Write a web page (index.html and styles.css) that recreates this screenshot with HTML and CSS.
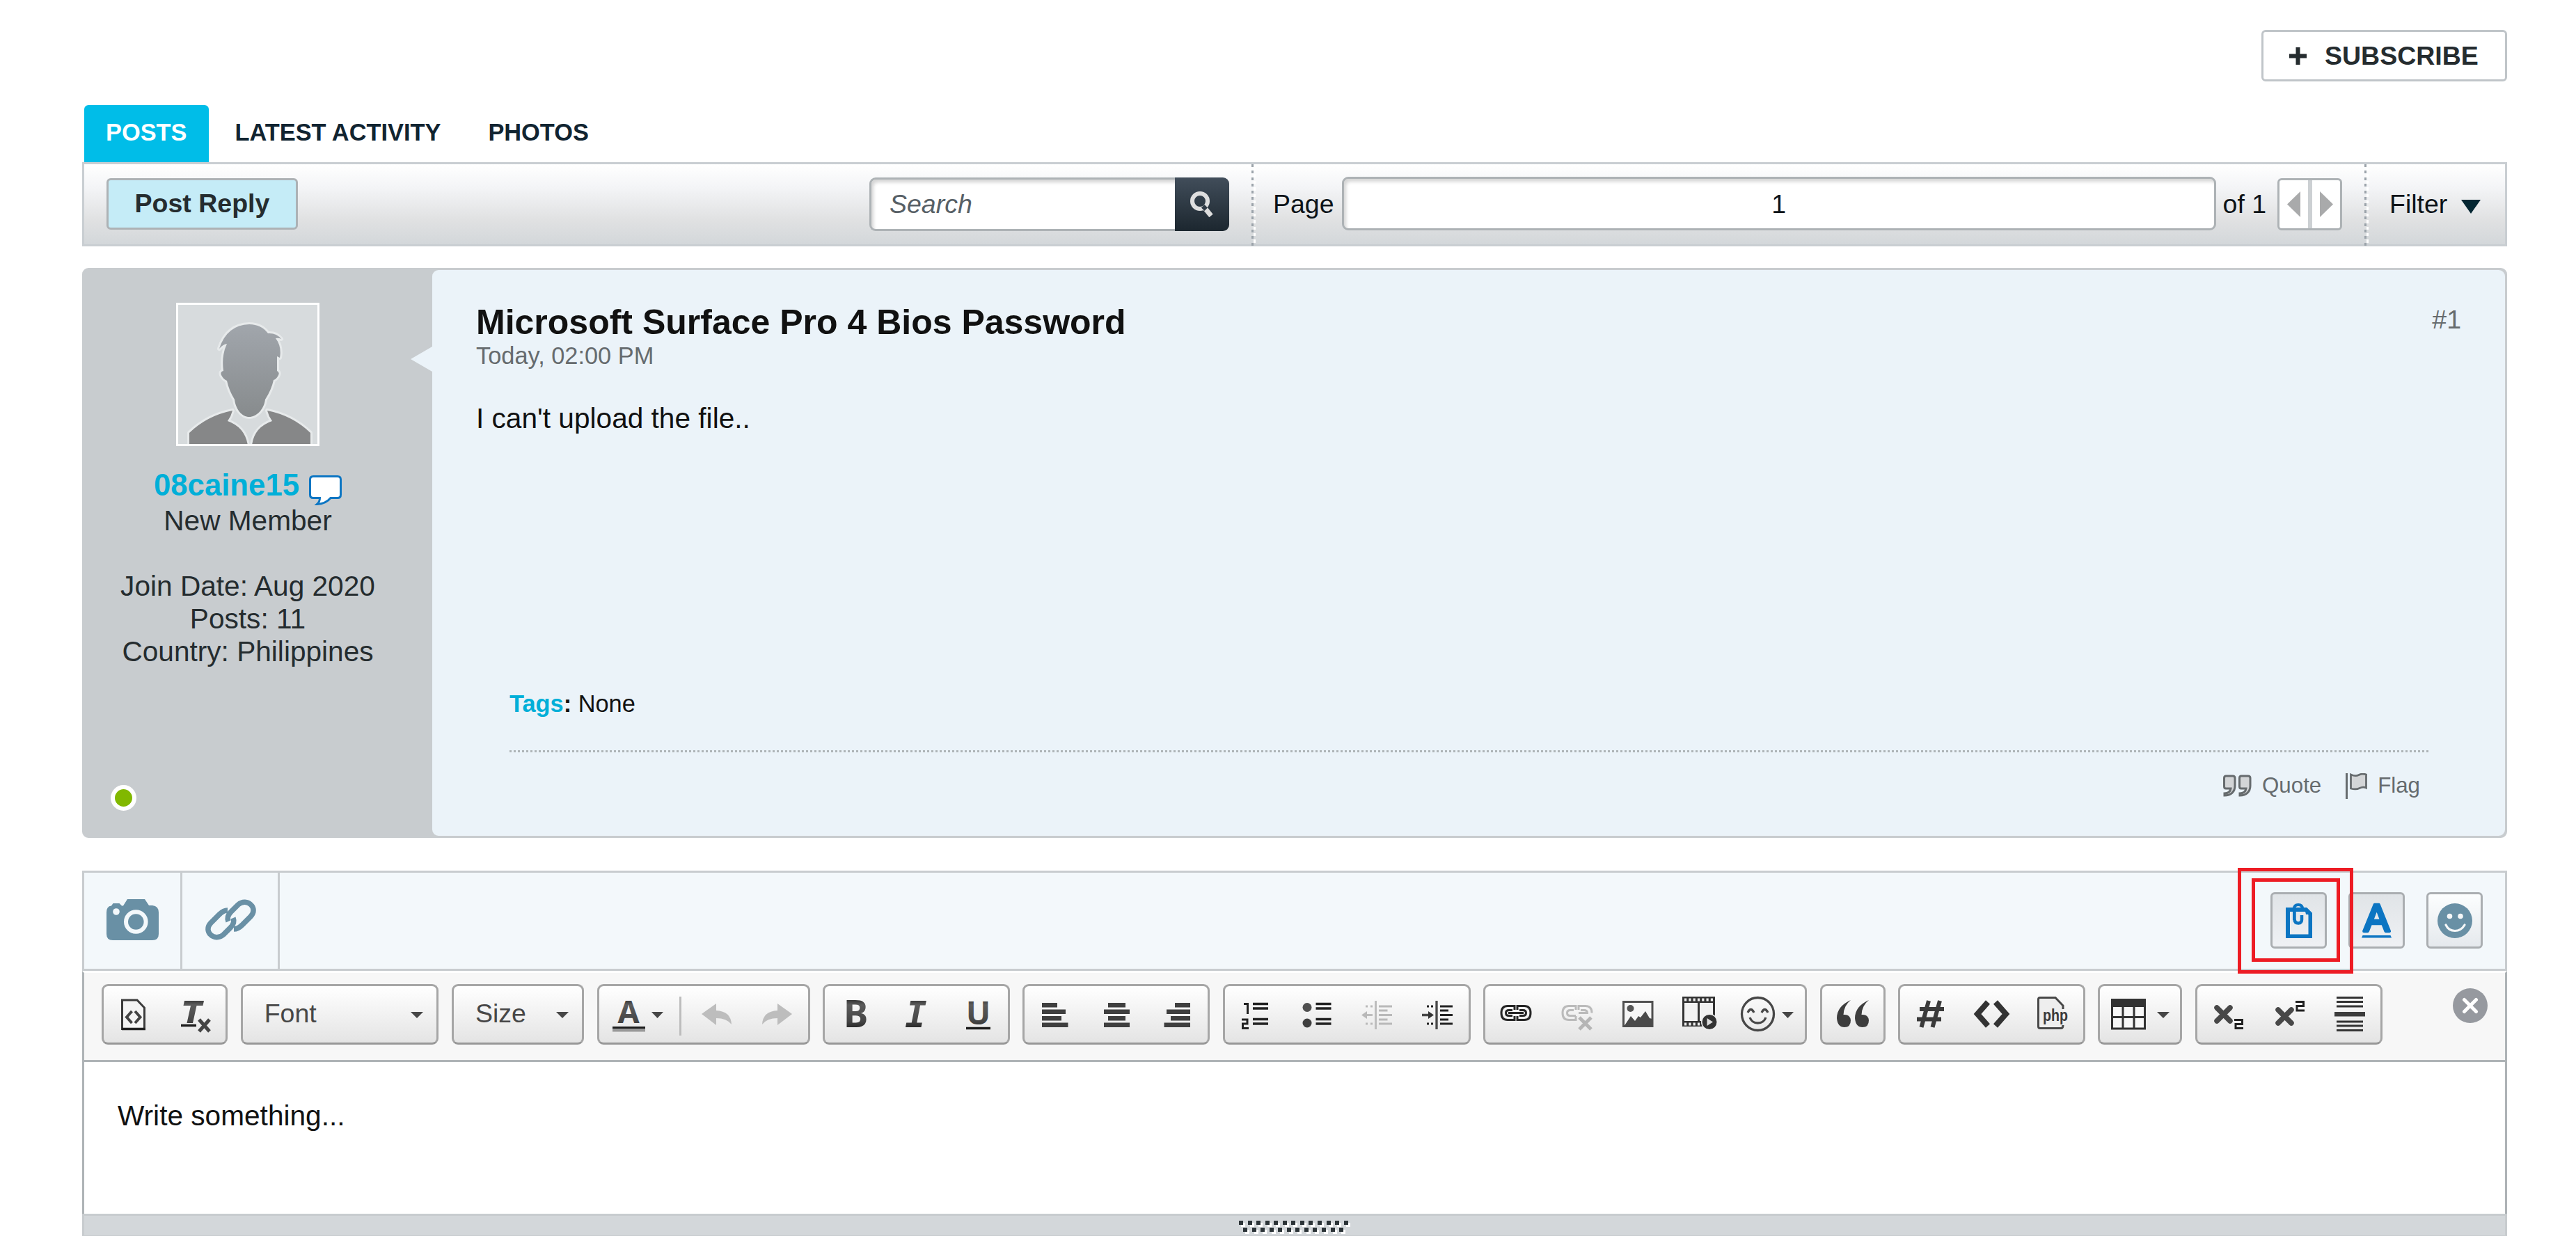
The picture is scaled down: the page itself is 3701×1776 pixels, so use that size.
FILE: index.html
```html
<!DOCTYPE html>
<html lang="en">
<head>
    <meta charset="UTF-8">
    <title>Microsoft Surface Pro 4 Bios Password</title>
    <link rel="stylesheet" href="styles.css">
</head>
<body>
    <!-- shared gradient for the editor icons -->
    <svg class="defs" width="0" height="0">
        <defs>
            <linearGradient id="ink" gradientUnits="userSpaceOnUse" x1="0" y1="18" x2="0" y2="62">
                <stop offset="0" stop-color="#2a2a2a"/>
                <stop offset="0.2" stop-color="#5c5c5c"/>
                <stop offset="0.75" stop-color="#444"/>
                <stop offset="1" stop-color="#222"/>
            </linearGradient>
            <linearGradient id="face" x1="0" y1="0" x2="0" y2="1">
                <stop offset="0" stop-color="#a1a6ac"/>
                <stop offset="1" stop-color="#878b8d"/>
            </linearGradient>
        </defs>
    </svg>

    <div class="page">
        <div class="top-actions">
            <button class="subscribe">
                <svg width="25" height="25" viewBox="0 0 25 25"><path d="M9.500 0h6v9.500H25v6h-9.500V25h-6v-9.500H0v-6h9.500z" fill="#252c2f"/></svg>
                <span>SUBSCRIBE</span>
            </button>
        </div>

        <div class="tabs">
            <a class="tab active">POSTS</a>
            <a class="tab">LATEST ACTIVITY</a>
            <a class="tab">PHOTOS</a>
        </div>

        <div class="toolbar">
            <button class="post-reply">Post Reply</button>
            <div class="search">
                <div class="search-input">Search</div>
                <button class="search-btn">
                    <svg width="34" height="37" viewBox="0 0 34 37"><circle cx="14" cy="14" r="11" fill="none" stroke="#dedede" stroke-width="6"/><path d="M21 24L30 35" stroke="#dedede" stroke-width="7"/><path d="M20.500 19L25 23.500L20.500 28L16 23.500z" fill="#303b46"/></svg>
                </button>
            </div>
            <span class="divider"></span>
            <div class="paging">
                <span>Page</span>
                <div class="page-input">1</div>
                <span class="page-total">of 1</span>
                <div class="pager">
                    <span><svg width="19" height="37" viewBox="0 0 19 37"><path d="M19 0v37L0 18.500z" fill="#a9aaab"/></svg></span>
                    <span><svg width="19" height="37" viewBox="0 0 19 37"><path d="M0 0v37L19 18.500z" fill="#a9aaab"/></svg></span>
                </div>
            </div>
            <span class="divider"></span>
            <div class="filter">
                <span>Filter</span>
                <svg width="28" height="20" viewBox="0 0 28 20"><path d="M0 0h28L14 20z" fill="#042632"/></svg>
            </div>
        </div>

        <div class="post">
            <div class="author">
                <div class="avatar">
                    <svg width="200" height="200" viewBox="0 0 200 200">
                        <rect width="200" height="200" fill="#d7dbdd"/>
                        <g stroke="#e7eaeb" stroke-width="6" paint-order="stroke" stroke-linejoin="round">
                            <path d="M16 202V184Q42 159 78 152Q76 160 71 167Q96 176 100 202z" fill="#868788"/>
                            <path d="M190 202V184Q164 159 128 152Q130 160 135 167Q109 176 106 202z" fill="#868788"/>
                            <path d="M102 28C114 28 123 33 129 41Q141 40 148 49Q144 47 140 48Q149 60 146 76L142 74V95Q146 97 144 101Q141 107 137 108Q134 122 125 136C123 151 112 161 102 161S83 151 81 136Q73 123 70 109Q65 107 62 101Q60 96 65 95Q62 73 70 56Q64 57 59 63Q70 29 102 28z" fill="url(#face)"/>
                        </g>
                    </svg>
                </div>
                <div class="username">
                    <span>08caine15</span>
                    <svg width="47" height="43" viewBox="0 0 47 43"><path d="M6 1.500H41Q45.500 1.500 45.500 6V28Q45.500 32.500 41 32.500H31Q24 41 11.500 41.500Q15.500 38 15.500 32.500H6Q1.500 32.500 1.500 28V6Q1.500 1.500 6 1.500z" fill="#fff" stroke="#0d76c3" stroke-width="3"/></svg>
                </div>
                <div>New Member</div>
                <div class="stats">
                    <div>Join Date: Aug 2020</div>
                    <div>Posts: 11</div>
                    <div>Country: Philippines</div>
                </div>
                <span class="online"></span>
            </div>
            <div class="content">
                <span class="arrow"></span>
                <div class="heading">
                    <h2>Microsoft Surface Pro 4 Bios Password</h2>
                    <span class="number">#1</span>
                </div>
                <div class="date">Today, 02:00 PM</div>
                <div class="message">I can't upload the file..</div>
                <div class="post-footer">
                    <div class="tags"><b><a>Tags</a>:</b> None</div>
                    <div class="controls">
                        <a class="quote">
                            <svg width="41" height="32" viewBox="0 0 41 32"><g fill="#d3d5d7" stroke="#666b6e" stroke-width="3"><path id="q" d="M4 2H14Q17 2 17 5V16C17 25 11 30 2 30V27Q10 27 11 20H4Q1.500 20 1.500 17V5Q1.500 2 4 2z"/><use href="#q" x="22"/></g></svg>
                            <span>Quote</span>
                        </a>
                        <a class="flag">
                            <svg width="31" height="37" viewBox="0 0 31 37"><path d="M0 0h3v37H0z" fill="#666b6e"/><path d="M7.500 2Q14 5 19 2.500T29.500 2V21Q25 19 20 21.500T7.500 22z" fill="#d3d5d7" stroke="#666b6e" stroke-width="2.800"/></svg>
                            <span>Flag</span>
                        </a>
                    </div>
                </div>
            </div>
        </div>

        <div class="editor">
            <div class="attach-bar">
                <a class="attach">
                    <svg width="75" height="59" viewBox="0 0 75 59"><path d="M30 0H55L61 9H66Q75 10 75 19V50Q75 59 66 59H9Q0 59 0 50V19Q0 10 7 9.500L9.500 6H18.500L22 9.500H24z" fill="#6990a5"/><circle cx="14" cy="18" r="4.800" fill="#f3f8fb"/><circle cx="42.300" cy="32.500" r="14.300" fill="none" stroke="#f3f8fb" stroke-width="6"/></svg>
                </a>
                <a class="attach">
                    <svg width="75" height="59" viewBox="0 0 75 59"><g fill="none" stroke="#6990a5" stroke-width="7.500"><path id="lk" d="M33 16C28 16 24 19 21 22L9 34C-3 46 14 62 27 51L37 41C42 36 43 32 41 27"/><use href="#lk" transform="rotate(180 37.500 29.500)"/></g></svg>
                </a>
                <div class="toggles">
                    <div class="toggle pressed marked">
                        <svg width="38" height="50" viewBox="0 0 38 50"><path d="M3 9H29L35.500 15.500V47.500H3z" fill="none" stroke="#0c75c2" stroke-width="6"/><path d="M27 6L38 16H29z" fill="#0c75c2"/><path d="M12 24V8Q12 2 18 2T24 8" fill="none" stroke="#0c75c2" stroke-width="4"/><path d="M12.500 12V22Q12.500 28.500 18 28.500T23 22V17" fill="none" stroke="#0c75c2" stroke-width="4.500"/></svg>
                    </div>
                    <div class="toggle pressed">
                        <svg class="letter" width="43" height="51" viewBox="0 0 43 51"><text class="letter-a" x="21.500" y="41" text-anchor="middle">A</text><path d="M1.500 47H41.500L43 50.500H0z" fill="#0c75c2"/></svg>
                    </div>
                    <div class="toggle">
                        <svg width="50" height="50" viewBox="0 0 50 50"><circle cx="25" cy="25" r="25" fill="#6990a5"/><circle cx="17.500" cy="18.500" r="3.800" fill="#f5f7f8"/><circle cx="33" cy="18.500" r="3.800" fill="#f5f7f8"/><path d="M12 31Q16 39.500 25 39.500T39 31" fill="none" stroke="#f5f7f8" stroke-width="3.200" stroke-linecap="round"/></svg>
                    </div>
                </div>
            </div>

            <div class="format-bar">
                <div class="group">
                    <svg class="btn" viewBox="0 0 87.500 81"><path d="M26.500 20H48L58.500 31V61.500H26.500z" fill="#f5f5f5" stroke="#3c3c3c" stroke-width="3"/><path d="M26 61.500H60" stroke="#222" stroke-width="3.500"/><path d="M40.500 36L33 44.500L40.500 53M45 36L52.500 44.500L45 53" fill="none" stroke="#444" stroke-width="4"/></svg>
                    <svg class="btn" viewBox="0 0 87.500 81"><path d="M28 21H56L54.500 28H45.500L40 53H31.500L37 28H26.500z" fill="url(#ink)"/><path d="M23 56.500H45" stroke="#1c1c1c" stroke-width="3.500"/><path d="M49 48L64 65M64 48L49 65" stroke="#444" stroke-width="5"/></svg>
                </div>
                <div class="group combo font-combo"><span>Font</span><i class="caret"></i></div>
                <div class="group combo size-combo"><span>Size</span><i class="caret"></i></div>
                <div class="group">
                    <svg class="btn color" viewBox="0 0 124.500 81"><text class="glyph" x="42" y="53" font-size="45" text-anchor="middle">A</text><path d="M19 58H66V61H19z" fill="#1c1c1c"/><path d="M19 61H66V65.500H19z" fill="#999"/><path d="M75 37H92L83.500 46z" fill="#474747"/><path d="M115 15H118V71H115z" fill="#bdbdbd"/></svg>
                    <svg class="btn" viewBox="0 0 87.500 81"><path id="undo" d="M22 40L43 25V35Q64 36 65 55Q58 46 43 46V56z" fill="#bdbdbd"/></svg>
                    <svg class="btn" viewBox="0 0 87.500 81"><use href="#undo" transform="matrix(-1 0 0 1 87 0)"/></svg>
                </div>
                <div class="group">
                    <svg class="btn" viewBox="0 0 87.500 81"><text class="glyph" x="27" y="59" font-size="53">B</text></svg>
                    <svg class="btn" viewBox="0 0 87.500 81"><text class="glyph mono" x="43" y="59" font-size="52" text-anchor="middle">I</text></svg>
                    <svg class="btn" viewBox="0 0 87.500 81"><text class="glyph" x="45.500" y="54.500" font-size="47" text-anchor="middle">U</text><path d="M28 60.500H63" stroke="#1c1c1c" stroke-width="3.500"/></svg>
                </div>
                <div class="group">
                    <svg class="btn" viewBox="0 0 87.500 81"><path d="M25 24h22v6.500H25zM25 33.500h34v6.500H25zM25 43h28v6.500H25zM25 52.500h37.500v6.500H25z" fill="#3f3f3f"/></svg>
                    <svg class="btn" viewBox="0 0 87.500 81"><path d="M32 24h25v6.500H32zM26 33.500h37v6.500H26zM32 43h25v6.500H32zM26 52.500h37v6.500H26z" fill="#3f3f3f"/></svg>
                    <svg class="btn" viewBox="0 0 87.500 81"><path d="M41 24h22v6.500H41zM29 33.500h34v6.500H29zM35 43h28v6.500H35zM25.500 52.500h37.500v6.500H25.500z" fill="#3f3f3f"/></svg>
                </div>
                <div class="group">
                    <svg class="btn" viewBox="0 0 87.500 81"><path d="M27 25.500H32.500V40M24 48H32V54H25.500V60.500H34" fill="none" stroke="#222" stroke-width="3"/><path d="M40 25.500H62M40 32H62M40 47.500H62M40 54H62" stroke="#222" stroke-width="3.500"/></svg>
                    <svg class="btn" viewBox="0 0 87.500 81"><circle cx="31" cy="30.500" r="6.500" fill="#505050"/><circle cx="31" cy="53" r="6.500" fill="#3f3f3f"/><path d="M43.500 25.500H65.500M43.500 32H65.500M43.500 47.500H65.500M43.500 54H65.500" stroke="#222" stroke-width="3.500"/></svg>
                    <svg class="btn" viewBox="0 0 87.500 81"><path d="M27 29H30M34 29H37M27 54H30M34 54H37M46 29H65M46 35H58.500M46 41.500H65M46 48H58.500M46 54H65" stroke="#b9b9b9" stroke-width="3"/><path d="M41.500 21V62M37 41.500H25" stroke="#bdbdbd" stroke-width="3"/><path d="M21 41.500L29 36V47z" fill="#b9b9b9"/></svg>
                    <svg class="btn" viewBox="0 0 87.500 81"><path d="M28 29H31M34 29H37M28 54H31M34 54H37M47 29H65M47 35H59M47 41.500H65M47 48H59M47 54H65" stroke="#222" stroke-width="3.200"/><path d="M42 21V62M21 41.500H32" stroke="#484848" stroke-width="3.300"/><path d="M38 41.500L30 36V47z" fill="#333"/></svg>
                </div>
                <div class="group">
                    <svg class="btn" viewBox="0 0 87.500 81"><g fill="none" stroke="#262626" stroke-width="3"><path d="M42 34V28.500H32Q23 28.500 23 38.500T32 48.500H42V43M46 34V28.500H56Q65 28.500 65 38.500T56 48.500H46V43"/><path d="M39 34.500H34Q29.500 34.500 29.500 38.500T34 42.500H39M49 34.500H54Q58.500 34.500 58.500 38.500T54 42.500H49M33 38.500H55"/></g></svg>
                    <svg class="btn" viewBox="0 0 87.500 81"><g fill="none" stroke="#bbb" stroke-width="3"><path d="M42 34V28.500H32Q23 28.500 23 38.500T32 48.500H42V43M46 34V28.500H56Q65 28.500 65 38.500"/><path d="M39 34.500H34Q29.500 34.500 29.500 38.500T34 42.500H42M49 34.500H54Q58.500 34.500 58.500 38.500H46"/></g><path d="M47 45L64 62M64 45L47 62" stroke="#b5b5b5" stroke-width="5"/></svg>
                    <svg class="btn" viewBox="0 0 87.500 81"><path d="M23.500 22.500H65V57.500H23.500z" fill="#f6f6f6" stroke="#505050" stroke-width="3"/><circle cx="33.500" cy="32" r="5" fill="#555"/><path d="M24 58L34 43L40 50L45 43L48 45L55 36L61 46L65 47V58z" fill="#4a4a4a"/></svg>
                    <svg class="btn" viewBox="0 0 87.500 81"><path d="M20 15H67V58H20z" fill="#333"/><path d="M23 24H42V50H23zM45 24H64V50H45z" fill="#f2f2f2"/><path d="M23 19.500H65M23 54.500H46" stroke="#eee" stroke-width="4" stroke-dasharray="3.200 3.100"/><circle cx="59" cy="51.500" r="12" fill="#f0f0f0"/><circle cx="59" cy="51.500" r="10.500" fill="#333"/><path d="M55.500 46V57L64 51.500z" fill="#ddd"/></svg>
                    <svg class="btn wide" viewBox="0 0 109 81"><g fill="none" stroke="#474747" stroke-width="3.300"><ellipse cx="41.500" cy="40" rx="23" ry="23.500"/><path d="M27 38Q31.500 29 36 38M47 38Q51.500 29 56 38M30 45Q33 53 41.500 53T53 45"/></g><path d="M76 37H93L84.500 46z" fill="#474747"/></svg>
                </div>
                <div class="group">
                    <svg class="btn" viewBox="0 0 87.500 81"><path id="qo" d="M41 20Q31 28 30.500 41Q40 40 41 49Q41 59 32 59Q22 59 21 46Q21 29 41 20z" fill="#3d3d3d"/><use href="#qo" x="26"/></svg>
                </div>
                <div class="group">
                    <svg class="btn" viewBox="0 0 87.500 81"><path d="M41 21L30.500 59M57 21L46.500 59M28 33H63M24 47.500H59" stroke="#3a3a3a" stroke-width="6"/></svg>
                    <svg class="btn" viewBox="0 0 87.500 81"><path d="M38 23L23 40L38 57M49 23L64 40L49 57" fill="none" stroke="#333" stroke-width="8"/></svg>
                    <svg class="btn" viewBox="0 0 87.500 81"><path d="M59 33V28L48 16.500H26Q23.500 16.500 23.500 19V58Q23.500 60.500 26 60.500H56Q59 60.500 59 56" fill="#eee" stroke="#484848" stroke-width="3"/><text class="php" x="30" y="50" textLength="36" lengthAdjust="spacingAndGlyphs">php</text></svg>
                </div>
                <div class="group">
                    <svg class="btn table" viewBox="0 0 115 81"><path d="M17.500 29H64.500V61H17.500z" fill="#f8f8f8"/><path d="M16 18H66V30H16z" fill="#333"/><path d="M17.500 28V61H64.500V28M33 28V61M49 28V61M17.500 44.500H64.500" fill="none" stroke="#333" stroke-width="3"/><path d="M82 37H100L91 46z" fill="#474747"/></svg>
                </div>
                <div class="group">
                    <svg class="btn" viewBox="0 0 87.500 81"><path d="M28 31L47 50M47 31L28 50" stroke="#484848" stroke-width="7.500" stroke-linecap="round"/><path d="M53 48.500H64.500V54.500H55V60.500H66" fill="none" stroke="#222" stroke-width="3"/></svg>
                    <svg class="btn" viewBox="0 0 87.500 81"><path d="M28 34L47 53M47 34L28 53" stroke="#484848" stroke-width="7.500" stroke-linecap="round"/><path d="M53 22.500H64.500V28.500H55V35H66" fill="none" stroke="#222" stroke-width="3"/></svg>
                    <svg class="btn" viewBox="0 0 87.500 81"><path d="M25 16.500H63M25 22.500H63M25 29H63M25 51H63M25 57H63M25 63.500H63" stroke="#333" stroke-width="3"/><path d="M22 37H66V43.500H22z" fill="#3d3d3d"/></svg>
                </div>
                <svg class="close" width="50" height="50" viewBox="0 0 50 50"><circle cx="25" cy="25" r="25" fill="#96999f"/><path d="M16.500 16.500L33.500 33.500M33.500 16.500L16.500 33.500" stroke="#fff" stroke-width="5" stroke-linecap="round"/></svg>
            </div>

            <div class="write-area">Write something...</div>
            <div class="resizer">
                <span class="dots"></span>
                <span class="dots short"></span>
            </div>
        </div>
    </div>
</body>
</html>
```
FILE: styles.css
```css
* {
    box-sizing: border-box;
}
body {
    margin: 0;
    background: #fff;
    font-family: "Liberation Sans", Arial, sans-serif;
    font-size: 40.625px;
    line-height: 47px;
    color: #111;
    overflow: hidden;
}
svg {
    display: block;
    flex: none;
}
button {
    font-family: inherit;
    padding: 0;
    margin: 0;
}
.defs {
    position: absolute;
}
.page {
    width: 3484px;
    margin-left: 118px;
    padding-top: 43px;
}

/* subscribe + tabs */
.top-actions {
    display: flex;
    justify-content: flex-end;
}
.subscribe {
    display: flex;
    align-items: center;
    gap: 26px;
    width: 353px;
    height: 74px;
    padding-left: 37px;
    padding-top: 1px;
    border: 3px solid #c0c5c9;
    border-radius: 6px;
    background: #fff;
    color: #252c2f;
    font-size: 37.5px;
    font-weight: bold;
}
.tabs {
    display: flex;
    margin-top: 34px;
    padding-left: 3px;
    height: 82px;
    font-size: 34.375px;
    font-weight: bold;
    line-height: 79px;
    color: #112431;
}
.tab {
    padding: 0 30.5px 0 31px;
    margin-right: 6.5px;
}
.tab.active {
    width: 179px;
    background: #00bde8;
    color: #fff;
    border-radius: 6px 6px 0 0;
}

/* toolbar */
.toolbar {
    display: flex;
    align-items: center;
    height: 121px;
    border: 3px solid #c9ced2;
    background: linear-gradient(#fff, #f4f5f7 28%, #e0e1e2 70%, #d3d7da);
    font-size: 37.5px;
    color: #0c1318;
}
.post-reply {
    width: 275px;
    height: 74px;
    margin-left: 32px;
    margin-top: -2px;
    border: 3px solid #adb2b5;
    border-radius: 6px;
    background: #c5ecf7;
    color: #252c2f;
    font-size: 37.5px;
    font-weight: bold;
}
.search {
    display: flex;
    width: 517px;
    height: 77px;
    margin-left: auto;
}
.search-input {
    flex: 1;
    padding-left: 26px;
    border: 3px solid #adb2b5;
    border-right: 0;
    border-radius: 9px 0 0 9px;
    background: #fff;
    box-shadow: inset 3px 4px 5px #d5d5d5;
    color: #576066;
    font-style: italic;
    line-height: 70px;
}
.search-btn {
    width: 78px;
    display: flex;
    align-items: center;
    justify-content: center;
    border: 0;
    border-radius: 0 9px 9px 0;
    background: linear-gradient(#414d5a, #1c272f);
}
.divider {
    flex: none;
    align-self: stretch;
    width: 6px;
    margin: 0 25px -3px 32px;
    background:
        repeating-linear-gradient(#9ba3aa 0 4px, transparent 4px 9.4px) 0 0 / 3px 100% no-repeat,
        repeating-linear-gradient(transparent 0 5px, #fff 5px 9.4px) 3px 0 / 3px 100% no-repeat;
}
.paging {
    flex: none;
    display: flex;
    align-items: center;
    width: 1536px;
}
.page-input {
    flex: none;
    width: 1256px;
    height: 77px;
    margin: -2px 10px 0 11px;
    border: 3px solid #adb2b5;
    border-radius: 9px;
    background: #fff;
    box-shadow: inset 3px 4px 5px #d5d5d5;
    line-height: 73px;
    text-align: center;
}
.pager {
    display: flex;
    width: 93px;
    height: 75px;
    margin-left: auto;
    border: 3px solid #adb2b5;
    border-radius: 6px;
    background: #fff;
}
.pager span {
    flex: 1;
    display: flex;
    align-items: center;
    justify-content: center;
}
.pager span:first-child {
    border-right: 6px solid #ccd0d3;
    flex: 0 0 47px;
}
.filter {
    flex: none;
    display: flex;
    align-items: center;
    justify-content: space-between;
    width: 171px;
    padding: 0 35px 0 5px;
}
.filter svg {
    margin-top: 6px;
}

/* post */
.post {
    display: flex;
    height: 819px;
    margin-top: 31px;
    border: 3px solid #c8cccf;
    border-radius: 9px;
    background: #c8cccf;
}
.author {
    position: relative;
    width: 500px;
    padding: 47px 30px 0 0;
    text-align: center;
    color: #252c2f;
}
.avatar {
    width: 206px;
    margin: 0 auto;
    border: 3px solid #fff;
}
.username {
    display: flex;
    justify-content: center;
    gap: 14px;
    margin-top: 33px;
    height: 51px;
    font-size: 43.75px;
    font-weight: bold;
    line-height: 46px;
    color: #00afd8;
}
.username svg {
    margin-top: 9px;
}
.stats {
    margin-top: 47px;
}
.online {
    position: absolute;
    left: 38px;
    bottom: 36px;
    width: 37px;
    height: 37px;
    border: 6px solid #fff;
    border-radius: 50%;
    background: #81b800;
}
.content {
    position: relative;
    flex: 1;
    display: flex;
    flex-direction: column;
    padding: 50px 63px 53px 63px;
    border-radius: 9px;
    background: #ebf3f9;
}
.arrow {
    position: absolute;
    left: -31px;
    top: 110px;
    border: 18px solid transparent;
    border-left: 0;
    border-right: 31px solid #ebf3f9;
}
.heading {
    display: flex;
    justify-content: space-between;
    line-height: 50px;
}
h2 {
    margin: 0;
    font-size: 50px;
}
.number {
    color: #666b6e;
    font-size: 37.5px;
    line-height: 42px;
}
.date {
    font-size: 34.375px;
    line-height: 46px;
    color: #666b6e;
}
.message {
    margin-top: 44px;
}
.post-footer {
    margin: auto 47px 0 48px;
}
.tags {
    padding-bottom: 48px;
    font-size: 34.375px;
    line-height: 38px;
}
.tags a {
    color: #00afd8;
}
.controls {
    display: flex;
    justify-content: flex-end;
    align-items: center;
    gap: 35px;
    padding: 32px 12px 0 0;
    background: repeating-linear-gradient(90deg, #aeb4b7 0 3px, transparent 3px 6px) 0 0 / 100% 3px no-repeat;
    font-size: 31.25px;
    line-height: 38px;
    color: #666b6e;
}
.controls a {
    display: flex;
    align-items: center;
    gap: 15px;
}

/* editor */
.editor {
    margin-top: 47px;
}
.attach-bar {
    display: flex;
    height: 144px;
    border: 3px solid #c8cccf;
    background: #f3f8fb;
}
.attach {
    display: flex;
    align-items: center;
    justify-content: center;
    width: 140.5px;
    padding-bottom: 3px;
    padding-left: 2px;
    border-right: 3px solid #c8cccf;
}
.toggles {
    display: flex;
    gap: 31px;
    margin: 28px 32px 0 auto;
}
.toggle {
    display: flex;
    align-items: center;
    justify-content: center;
    width: 81px;
    height: 81px;
    border: 3px solid #aaaeb1;
    border-radius: 6px;
    background: linear-gradient(#fcfefe, #e5e9ed);
}
.toggle.pressed {
    background: linear-gradient(#e0e4e7, #eff1f4);
}
.letter {
    overflow: visible;
}
.letter-a {
    font-size: 55px;
    fill: #0c75c2;
    stroke: #0c75c2;
    stroke-width: 4.5px;
    stroke-linejoin: round;
}
/* red frames around the attachment button */
.marked {
    position: relative;
    z-index: 1;
}
.marked::before,
.marked::after {
    content: "";
    position: absolute;
    box-sizing: border-box;
    border: 5px solid #ed1c24;
}
.marked::before {
    left: -50px;
    top: -38px;
    width: 166px;
    height: 152px;
}
.marked::after {
    left: -30px;
    top: -23px;
    width: 127px;
    height: 120px;
}
.format-bar {
    display: flex;
    gap: 18.7px;
    height: 131px;
    padding: 16px 25px 0;
    border: 3px solid #aeb3b6;
    border-top-color: #fff;
    background: #f7f7f7;
}
.group {
    display: flex;
    flex: none;
    height: 87px;
    border: 3px solid #a6a6a6;
    border-bottom-color: #979797;
    border-radius: 9px;
    background: linear-gradient(#fff, #e4e4e4);
}
.btn {
    width: 87.5px;
    height: 81px;
}
.btn.color {
    width: 124.5px;
}
.btn.wide {
    width: 109px;
}
.btn.table {
    width: 115px;
}
.combo {
    align-items: center;
    justify-content: space-between;
    padding: 0 19px 0 31px;
    font-size: 37.5px;
    color: #474747;
}
.font-combo {
    width: 284.5px;
}
.size-combo {
    width: 190.5px;
}
.combo span {
    margin-top: -3px;
}
.caret {
    border: 9px solid transparent;
    border-top-color: #474747;
    border-bottom: 0;
    margin-top: 2px;
}
.glyph {
    font-family: "Noto Sans", sans-serif;
    font-weight: bold;
    fill: url(#ink);
}
.glyph.mono {
    font-family: "DejaVu Sans Mono", monospace;
    font-style: italic;
}
.php {
    font-family: "Liberation Sans", Arial, sans-serif;
    font-size: 23px;
    font-weight: bold;
    fill: #3a3a3a;
}
.close {
    margin: 6px 0 0 auto;
}
.write-area {
    height: 218px;
    padding: 54px 48px 0;
    border: solid #aeb3b6;
    border-width: 0 3px;
}
.resizer {
    height: 32px;
    padding-top: 7px;
    border: 3px solid #c8cccf;
    border-bottom-width: 1px;
    background: #d3d7da;
}
.dots {
    display: block;
    width: 160px;
    height: 9.5px;
    margin: 0 auto;
    background:
        repeating-linear-gradient(90deg, #2b3337 0 6px, transparent 6px 12.56px) 0 0 / 157px 6px no-repeat,
        repeating-linear-gradient(90deg, transparent 0 3px, #fff 3px 9px, transparent 9px 12.56px) 0 3px / 160px 6px no-repeat;
}
.dots.short {
    width: 147.5px;
    background-size: 144.5px 6px, 147.5px 6px;
}
```
